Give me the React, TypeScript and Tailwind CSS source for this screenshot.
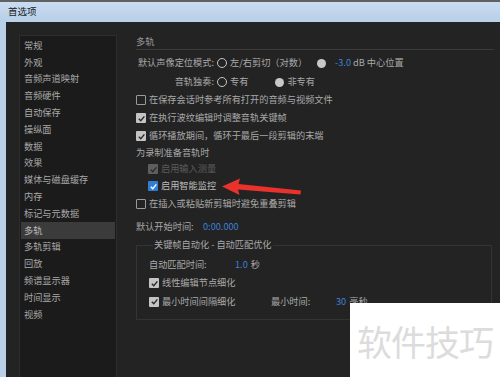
import React from 'react';

const font = { fontFamily: '"Noto Sans CJK SC", "Noto Sans", sans-serif' };

const navItems = [
  '常规',
  '外观',
  '音频声道映射',
  '音频硬件',
  '自动保存',
  '操纵面',
  '数据',
  '效果',
  '媒体与磁盘缓存',
  '内存',
  '标记与元数据',
  '多轨',
  '多轨剪辑',
  '回放',
  '频谱显示器',
  '时间显示',
  '视频',
];

type BoxKind = 'off' | 'on' | 'dim' | 'blue';

const Check = ({ color }: { color: string }) => (
  <svg viewBox="0 0 10 10" className="w-[9px] h-[9px]">
    <path d="M2 5.2 L4.2 7.4 L8.2 2.6" fill="none" stroke={color} strokeWidth="1.6" />
  </svg>
);

const Box = ({ kind }: { kind: BoxKind }) => {
  if (kind === 'off')
    return <span className="block w-[10px] h-[10px] border border-[#9a9a9a] rounded-[1px] shrink-0" />;
  if (kind === 'blue')
    return (
      <span className="w-[10px] h-[10px] bg-[#2f7fd8] rounded-[1px] flex items-center justify-center shrink-0">
        <Check color="#ffffff" />
      </span>
    );
  if (kind === 'dim')
    return (
      <span className="w-[10px] h-[10px] bg-[#5e5e5e] rounded-[1px] flex items-center justify-center shrink-0">
        <Check color="#2e2e2e" />
      </span>
    );
  return (
    <span className="w-[10px] h-[10px] bg-[#c4c4c4] rounded-[1px] flex items-center justify-center shrink-0">
      <Check color="#2a2a2a" />
    </span>
  );
};

const Radio = ({ filled, className = '' }: { filled?: boolean; className?: string }) =>
  filled ? (
    <span className={`block w-[9px] h-[9px] rounded-full bg-[#c8c8c8] shrink-0 ${className}`} />
  ) : (
    <span className={`block w-[10px] h-[10px] rounded-full border-[1.5px] border-[#c8c8c8] shrink-0 ${className}`} />
  );

const CheckRow = ({
  kind,
  label,
  className,
  dim,
}: {
  kind: BoxKind;
  label: string;
  className: string;
  dim?: boolean;
}) => (
  <div className={`flex items-center gap-[3px] ${className}`}>
    <Box kind={kind} />
    <span className={dim ? 'text-[#5c5c5c]' : ''}>{label}</span>
  </div>
);

export default function App() {
  return (
    <div
      className="relative w-[500px] h-[377px] overflow-hidden flex flex-col bg-[#232323] text-[9.2px] text-[#a9a9a9] leading-none"
      style={font}
    >
      <div className="h-[2px] bg-[#5f6163]" />
      <div className="h-[20px] bg-gradient-to-b from-[#c9dcf1] to-[#b8cfe8] flex items-center pl-[8px] text-[9.5px] text-[#1c1c1c]">
        首选项
      </div>
      <div className="flex-1 flex">
        <div className="w-[6px] bg-[#bad0e8]" />
        <div className="flex-1 flex pl-[13px] pt-[13px]">
          {/* category list */}
          <div className="w-[98px] bg-[#1b1b1b] border border-[#2e2e2e] pt-[1px] mb-[-4px]">
            {navItems.map((item) => (
              <div
                key={item}
                className={`h-[16.8px] flex items-center pl-[3px] mx-[1px] ${
                  item === '多轨' ? 'bg-[#3b3b3b] text-[#bdbdbd]' : ''
                }`}
              >
                {item}
              </div>
            ))}
          </div>

          {/* settings panel */}
          <div className="ml-[19px] w-[358px] flex flex-col">
            <div className="h-[15px] flex items-center text-[#9c9c9c] border-b border-[#3a3a3a]">多轨</div>

            <div className="h-[18px] mt-[4px] flex items-center">
              <span className="w-[78px] text-right">默认声像定位模式:</span>
              <Radio className="ml-[3px]" />
              <span className="ml-[3px]">左/右剪切（对数）</span>
              <Radio filled className="ml-[10px]" />
              <span className="ml-[9px] text-[#3d82d8]">-3.0</span>
              <span className="ml-[2px]">dB 中心位置</span>
            </div>
            <div className="h-[18px] mt-[1px] flex items-center">
              <span className="w-[78px] text-right">音轨独奏:</span>
              <Radio className="ml-[3px]" />
              <span className="ml-[3px]">专有</span>
              <Radio filled className="ml-[27px]" />
              <span className="ml-[3px]">非专有</span>
            </div>
            <CheckRow kind="off" label="在保存会话时参考所有打开的音频与视频文件" className="h-[18px]" />
            <CheckRow kind="on" label="在执行波纹编辑时调整音轨关键帧" className="h-[18px]" />
            <CheckRow kind="on" label="循环播放期间，循环于最后一段剪辑的末端" className="h-[18px]" />
            <div className="h-[16px] flex items-center">为录制准备音轨时</div>
            <CheckRow kind="dim" label="启用输入测量" dim className="h-[16px] pl-[12px]" />
            <CheckRow kind="blue" label="启用智能监控" className="h-[18px] pl-[12px] text-[#bdbdbd]" />
            <CheckRow kind="off" label="在插入或粘贴新剪辑时避免重叠剪辑" className="h-[18px]" />
            <div className="h-[18px] mt-[5px] flex items-center">
              <span className="w-[67px]">默认开始时间:</span>
              <span className="text-[#3d82d8]">0:00.000</span>
            </div>

            <fieldset className="mt-[2px] border border-[#343434] w-[356px] pl-[12px] pb-[8px]">
              <legend className="ml-[4px] px-[1px] h-[14px] flex items-center">关键帧自动化 - 自动匹配优化</legend>
              <div className="h-[18px] mt-[4px] flex items-center">
                <span className="w-[86px]">自动匹配时间:</span>
                <span className="text-[#3d82d8]">1.0</span>
                <span className="ml-[3px]">秒</span>
              </div>
              <CheckRow kind="on" label="线性编辑节点细化" className="h-[18px]" />
              <div className="h-[19px] flex items-center">
                <Box kind="on" />
                <span className="ml-[3px] w-[109px]">最小时间间隔细化</span>
                <span className="w-[65px]">最小时间:</span>
                <span className="text-[#3d82d8]">30</span>
                <span className="ml-[3px]">毫秒</span>
              </div>
            </fieldset>
          </div>
        </div>
      </div>

      {/* red annotation arrow */}
      <svg className="absolute left-0 top-0 pointer-events-none" width="500" height="377">
        <path d="M222 186.5 L240 178.5 L238.5 184 L301 190.5 L300.5 194.5 L238 189.5 L239.5 195 Z" fill="#e8322b" />
      </svg>

      {/* watermark */}
      <div className="absolute left-[350px] top-[303px] w-[150px] h-[74px] bg-white flex items-center justify-center">
        <span className="text-[35px] text-[#dcdcdc] tracking-[-1px]">软件技巧</span>
      </div>
    </div>
  );
}
